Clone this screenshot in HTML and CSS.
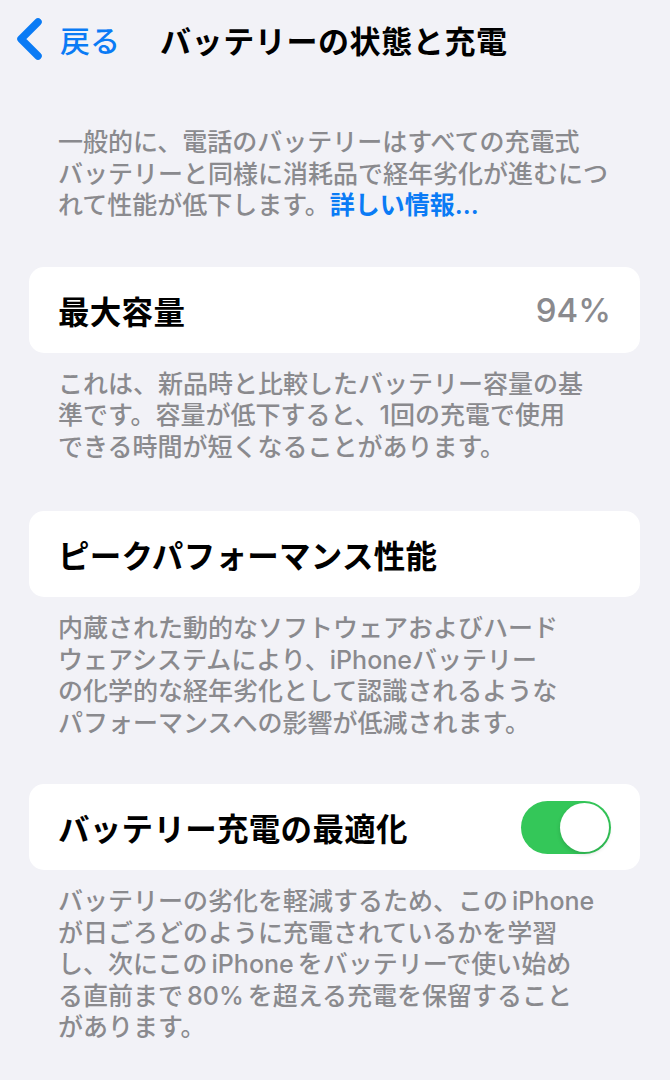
FILE: index.html
```html
<!DOCTYPE html>
<html lang="ja">
<head>
    <meta charset="UTF-8">
    <meta name="viewport" content="width=device-width, initial-scale=1.0">
    <title>バッテリーの状態と充電</title>
    <link rel="stylesheet" href="styles.css">
</head>
<body>
    <header class="nav">
        <svg class="chevron" width="28" height="42" viewBox="0 0 28 42">
            <path d="M23 4 L6 21 L23 38" fill="none" stroke="#0a7bf5" stroke-width="7.5" stroke-linecap="round" stroke-linejoin="round"/>
        </svg>
        <span class="back">戻る</span>
        <h1 class="title">バッテリーの状態と充電</h1>
    </header>

    <main class="content">
        <p class="note intro">
            一般的に、電話のバッテリーはすべての充電式<br>
            バッテリーと同様に消耗品で経年劣化が進むにつ<br>
            れて性能が低下します。<a class="link" href="#">詳しい情報...</a>
        </p>

        <section class="group">
            <div class="cell">
                <span class="label">最大容量</span>
                <span class="value">94%</span>
            </div>
            <p class="note">
                これは、新品時と比較したバッテリー容量の基<br>
                準です。容量が低下すると、1回の充電で使用<br>
                できる時間が短くなることがあります。
            </p>
        </section>

        <section class="group">
            <div class="cell">
                <span class="label">ピークパフォーマンス性能</span>
            </div>
            <p class="note">
                内蔵された動的なソフトウェアおよびハード<br>
                ウェアシステムにより、iPhoneバッテリー<br>
                の化学的な経年劣化として認識されるような<br>
                パフォーマンスへの影響が低減されます。
            </p>
        </section>

        <section class="group">
            <div class="cell">
                <span class="label">バッテリー充電の最適化</span>
                <span class="toggle on"><span class="knob"></span></span>
            </div>
            <p class="note">
                バッテリーの劣化を軽減するため、この<span class="gap">iPhone</span><br>
                が日ごろどのように充電されているかを学習<br>
                し、次にこの<span class="gap">iPhone</span>をバッテリーで使い始め<br>
                る直前まで<span class="gap">80%</span>を超える充電を保留すること<br>
                があります。
            </p>
        </section>
    </main>
</body>
</html>
```

FILE: styles.css
```css
body {
    margin: 0;
    background: #f2f2f7;
    color: #000;
    font-family: Inter, "Noto Sans CJK JP", sans-serif;
}

.nav {
    display: flex;
    align-items: center;
    height: 78px;
    padding-left: 15px;
}

.chevron {
    flex: none;
}

.back {
    margin-left: 17px;
    font-size: 30px;
    font-weight: 500;
    color: #0a7bf5;
}

.title {
    margin: 0 0 0 40px;
    font-size: 31px;
    font-weight: 700;
    letter-spacing: 0.6px;
}

.content {
    padding: 0 30px 0 29px;
}

.note {
    margin: 0;
    padding-left: 29px;
    font-size: 25px;
    font-weight: 500;
    line-height: 31.5px;
    color: #8a8a8e;
    white-space: nowrap;
}

.note .gap {
    margin: 0 4px;
}

.intro {
    margin-top: 49px;
    margin-bottom: 45px;
}

.link {
    color: #0a7bf5;
    font-weight: 600;
    text-decoration: none;
}

.group {
    margin-bottom: 45px;
}

.group:first-of-type {
    margin-bottom: 48px;
}

.group .note {
    margin-top: 16px;
}

.cell {
    display: flex;
    align-items: center;
    justify-content: space-between;
    height: 86px;
    padding: 0 29px;
    background: #fff;
    border-radius: 15px;
}

.label {
    font-size: 31.5px;
    font-weight: 600;
    letter-spacing: 0.3px;
}

.value {
    font-size: 33px;
    font-weight: 500;
    color: #8a8a8e;
}

.toggle {
    display: flex;
    align-items: center;
    justify-content: flex-end;
    width: 90px;
    height: 53px;
    padding: 0 2px;
    box-sizing: border-box;
    border-radius: 27px;
    background: #e9e9ea;
}

.toggle.on {
    background: #34c759;
}

.knob {
    width: 49px;
    height: 49px;
    border-radius: 50%;
    background: #fff;
    box-shadow: 0 2px 4px rgba(0, 0, 0, 0.15);
}
```
